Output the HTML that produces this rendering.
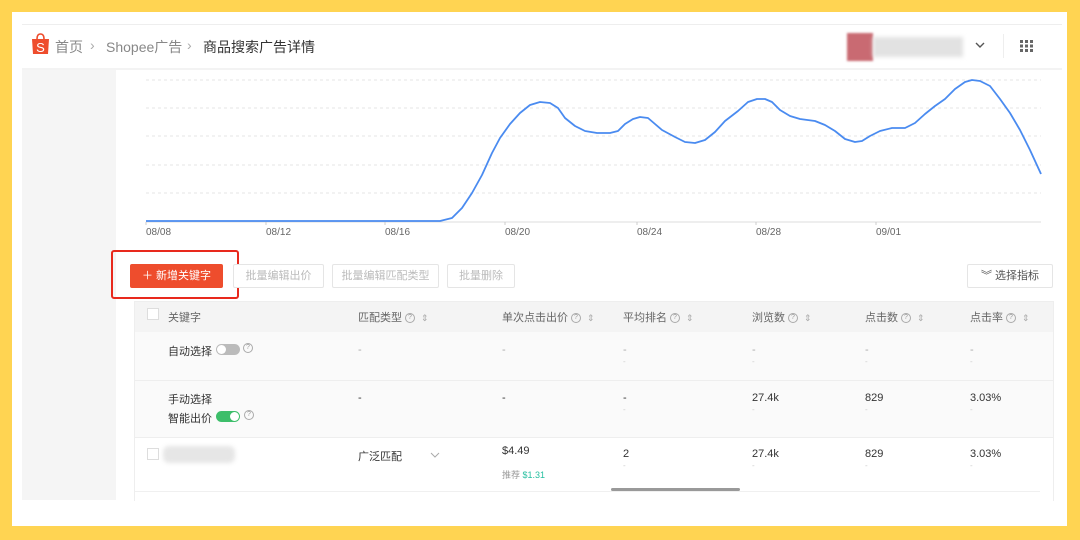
<!DOCTYPE html>
<html><head><meta charset="utf-8"><style>
*{margin:0;padding:0;box-sizing:border-box}
body{width:1080px;height:540px;background:#FFD452;position:relative;overflow:hidden;font-family:"Liberation Sans","Noto Sans CJK SC",sans-serif;color:#333}
.abs{position:absolute}
.inner{left:12px;top:12px;width:1055px;height:514px;background:#fff}
.t{position:absolute;font-size:11px;color:#333;white-space:nowrap}
.g{color:#aaa}
.btn{position:absolute;top:264px;height:24px;border:1px solid #e5e5e5;border-radius:2px;font-size:11px;color:#bbb;text-align:center;line-height:22px;background:#fff}
.q{display:inline-block;width:10px;height:10px;border:1px solid #aaa;border-radius:50%;font-size:7px;line-height:8px;text-align:center;color:#999;vertical-align:middle;margin-left:3px}
.s{color:#aaa;font-size:9px;margin-left:6px}
.dot{position:absolute;font-size:8px;color:#ccc}
.b{position:absolute;top:37px;font-size:14px;white-space:nowrap}
</style></head><body>
<div class="abs inner"></div>
<div class="abs" style="left:22px;top:24px;width:1040px;height:1px;background:#eee"></div>
<div class="abs" style="left:22px;top:68px;width:1040px;height:2px;background:#f3f3f3"></div>
<svg class="abs" style="left:31px;top:33px" width="19" height="22" viewBox="0 0 19 22"><path d="M6 6 Q6 1 9.5 1 Q13 1 13 6" fill="none" stroke="#EE4D2D" stroke-width="1.6"/><path d="M1 6 H18 L17 21 H2 Z" fill="#EE4D2D"/><text x="9.5" y="19" font-size="13" fill="#fff" text-anchor="middle" font-family="Liberation Sans">S</text></svg>
<div class="b" style="left:55px;color:#888">首页</div>
<div class="b" style="left:90px;color:#aaa">›</div>
<div class="b" style="left:106px;color:#888">Shopee广告</div>
<div class="b" style="left:187px;color:#aaa">›</div>
<div class="b" style="left:203px;color:#333">商品搜索广告详情</div>
<div class="abs" style="left:847px;top:33px;width:26px;height:28px;background:#c96a72;filter:blur(1px)"></div>
<div class="abs" style="left:873px;top:37px;width:90px;height:20px;background:#e2e2e2;filter:blur(2px)"></div>
<svg class="abs" style="left:975px;top:42px" width="10" height="7"><path d="M1 1 L5 5 L9 1" fill="none" stroke="#555" stroke-width="1.4"/></svg>
<div class="abs" style="left:1003px;top:34px;width:1px;height:24px;background:#eee"></div>
<svg class="abs" style="left:1020px;top:40px" width="14" height="12"><g fill="#666"><rect x="0" y="0" width="3" height="3"/><rect x="5" y="0" width="3" height="3"/><rect x="10" y="0" width="3" height="3"/><rect x="0" y="4.5" width="3" height="3"/><rect x="5" y="4.5" width="3" height="3"/><rect x="10" y="4.5" width="3" height="3"/><rect x="0" y="9" width="3" height="3"/><rect x="5" y="9" width="3" height="3"/><rect x="10" y="9" width="3" height="3"/></g></svg>
<div class="abs" style="left:22px;top:70px;width:94px;height:430px;background:#f5f5f5"></div>
<svg class="abs" style="left:0;top:0" width="1080" height="250">
<g stroke="#e4e4e4" stroke-dasharray="3,3"><line x1="146" y1="80" x2="1041" y2="80"/><line x1="146" y1="108" x2="1041" y2="108"/><line x1="146" y1="136" x2="1041" y2="136"/><line x1="146" y1="165" x2="1041" y2="165"/><line x1="146" y1="193" x2="1041" y2="193"/></g>
<line x1="146" y1="222" x2="1041" y2="222" stroke="#ddd"/>
<g stroke="#ccc"><line x1="146" y1="222" x2="146" y2="225"/><line x1="266" y1="222" x2="266" y2="225"/><line x1="385" y1="222" x2="385" y2="225"/><line x1="505" y1="222" x2="505" y2="225"/><line x1="637" y1="222" x2="637" y2="225"/><line x1="756" y1="222" x2="756" y2="225"/><line x1="876" y1="222" x2="876" y2="225"/></g>
<polyline fill="none" stroke="#4A8BF0" stroke-width="1.8" stroke-linejoin="round" points="146,221 440,221 452,218 462,208 472,193 482,175 492,153 500,138 510,124 520,113 530,105 540,102 550,103 558,108 565,118 575,126 585,131 597,133 610,133 618,131 625,124 633,119 640,117 648,118 655,124 662,130 675,137 685,142 695,143 705,140 715,132 725,121 738,111 748,102 757,99 765,99 772,102 780,110 790,116 800,119 815,121 825,125 835,131 845,139 855,142 862,141 870,136 880,131 892,128 905,128 915,123 925,114 935,106 945,99 955,89 965,82 972,80 980,81 990,86 1000,99 1010,113 1020,130 1030,150 1041,174"/>
<g font-size="10" fill="#666" font-family="Liberation Sans"><text x="146" y="235">08/08</text><text x="266" y="235">08/12</text><text x="385" y="235">08/16</text><text x="505" y="235">08/20</text><text x="637" y="235">08/24</text><text x="756" y="235">08/28</text><text x="876" y="235">09/01</text></g>
</svg>
<div class="abs" style="left:111px;top:250px;width:128px;height:49px;border:2px solid #E8291D;border-radius:3px"></div>
<div class="abs" style="left:130px;top:264px;width:93px;height:24px;background:#EE4D2D;border-radius:2px;color:#fff;font-size:11px;line-height:24px;text-align:center">＋ 新增关键字</div>
<div class="btn" style="left:233px;width:91px">批量编辑出价</div>
<div class="btn" style="left:332px;width:107px">批量编辑匹配类型</div>
<div class="btn" style="left:447px;width:68px">批量删除</div>
<div class="btn" style="left:967px;width:86px;color:#555">︾ 选择指标</div>
<div class="abs" style="left:134px;top:301px;width:920px;height:200px;border:1px solid #eee;border-bottom:none"></div>
<div class="abs" style="left:135px;top:302px;width:918px;height:30px;background:#f4f4f4"></div>
<div class="abs" style="left:135px;top:332px;width:918px;height:105px;background:#fafafa"></div>
<div class="abs" style="left:135px;top:380px;width:918px;height:1px;background:#eee"></div>
<div class="abs" style="left:135px;top:437px;width:918px;height:1px;background:#eee"></div>
<div class="abs" style="left:135px;top:491px;width:905px;height:1px;background:#f0f0f0"></div>
<div class="abs" style="left:611px;top:488px;width:129px;height:3px;background:#999;border-radius:2px"></div>
<div class="abs" style="left:147px;top:308px;width:12px;height:12px;border:1px solid #ddd;background:#fff"></div>
<div class="abs" style="left:147px;top:448px;width:12px;height:12px;border:1px solid #ddd;background:#fff"></div>
<div class="t" style="left:168px;top:309px;color:#666">关键字</div>
<div class="t" style="left:358px;top:309px;color:#666">匹配类型<span class="q">?</span><span class="s">⇕</span></div>
<div class="t" style="left:502px;top:309px;color:#666">单次点击出价<span class="q">?</span><span class="s">⇕</span></div>
<div class="t" style="left:623px;top:309px;color:#666">平均排名<span class="q">?</span><span class="s">⇕</span></div>
<div class="t" style="left:752px;top:309px;color:#666">浏览数<span class="q">?</span><span class="s">⇕</span></div>
<div class="t" style="left:865px;top:309px;color:#666">点击数<span class="q">?</span><span class="s">⇕</span></div>
<div class="t" style="left:970px;top:309px;color:#666">点击率<span class="q">?</span><span class="s">⇕</span></div>
<div class="t" style="left:168px;top:343px">自动选择</div>
<div class="abs" style="left:216px;top:344px;width:24px;height:11px;background:#bbb;border-radius:6px"><div class="abs" style="left:1px;top:1px;width:9px;height:9px;background:#fff;border-radius:50%"></div></div>
<div class="t" style="left:240px;top:342px"><span class="q">?</span></div>
<div class="t g" style="left:358px;top:344px">-</div><div class="t g" style="left:502px;top:344px">-</div>
<div class="t g" style="left:623px;top:344px">-</div><div class="t g" style="left:752px;top:344px">-</div><div class="t g" style="left:865px;top:344px">-</div><div class="t g" style="left:970px;top:344px">-</div>
<div class="dot" style="left:623px;top:357px">-</div><div class="dot" style="left:752px;top:357px">-</div><div class="dot" style="left:865px;top:357px">-</div><div class="dot" style="left:970px;top:357px">-</div>
<div class="t" style="left:168px;top:391px">手动选择</div>
<div class="t" style="left:168px;top:410px">智能出价</div>
<div class="abs" style="left:216px;top:411px;width:24px;height:11px;background:#3DBE6A;border-radius:6px"><div class="abs" style="left:14px;top:1px;width:9px;height:9px;background:#fff;border-radius:50%"></div></div>
<div class="t" style="left:241px;top:409px"><span class="q">?</span></div>
<div class="t" style="left:358px;top:392px">-</div><div class="t" style="left:502px;top:392px">-</div><div class="t" style="left:623px;top:392px">-</div>
<div class="t" style="left:752px;top:392px">27.4k</div><div class="t" style="left:865px;top:392px">829</div><div class="t" style="left:970px;top:392px">3.03%</div>
<div class="dot" style="left:623px;top:405px">-</div><div class="dot" style="left:752px;top:405px">-</div><div class="dot" style="left:865px;top:405px">-</div><div class="dot" style="left:970px;top:405px">-</div>
<div class="abs" style="left:163px;top:446px;width:72px;height:17px;background:#e6e6e6;filter:blur(2px);border-radius:6px"></div>
<div class="t" style="left:358px;top:448px">广泛匹配</div>
<svg class="abs" style="left:430px;top:452px" width="10" height="6"><path d="M1 1 L5 5 L9 1" fill="none" stroke="#aaa" stroke-width="1"/></svg>
<div class="t" style="left:502px;top:445px">$4.49</div>
<div class="t" style="left:502px;top:468px;font-size:9px;color:#999">推荐 <span style="color:#26BFA0">$1.31</span></div>
<div class="t" style="left:623px;top:448px">2</div><div class="t" style="left:752px;top:448px">27.4k</div><div class="t" style="left:865px;top:448px">829</div><div class="t" style="left:970px;top:448px">3.03%</div>
<div class="dot" style="left:623px;top:461px">-</div><div class="dot" style="left:752px;top:461px">-</div><div class="dot" style="left:865px;top:461px">-</div><div class="dot" style="left:970px;top:461px">-</div>
</body></html>
